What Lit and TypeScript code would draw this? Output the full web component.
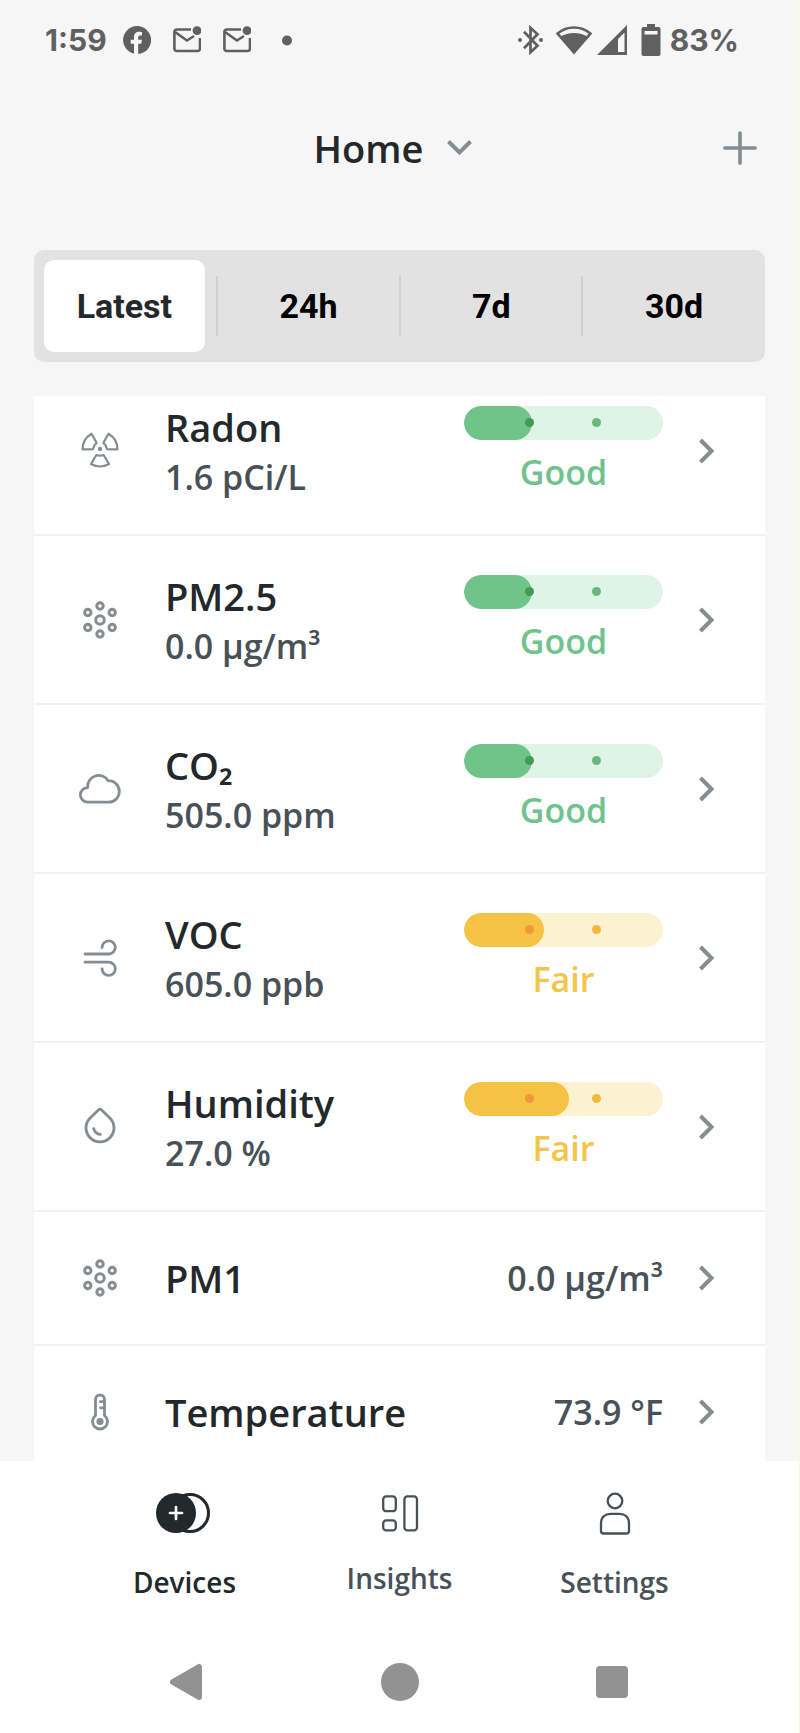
import { LitElement, html, css, svg, nothing, TemplateResult, SVGTemplateResult } from "lit";
import { customElement, property, state, query } from "lit/decorators.js";
import { classMap } from "lit/directives/class-map.js";
import { styleMap } from "lit/directives/style-map.js";

type Level = "good" | "fair";

interface Reading {
  name: string;
  value: string;
  icon: string;
  level?: Level;
  fill?: number;
}

const READINGS: Reading[] = [
  { name: "Radon", value: "1.6 pCi/L", icon: "radon", level: "good", fill: 34 },
  { name: "PM2.5", value: "0.0 µg/m³", icon: "particles", level: "good", fill: 34 },
  { name: "CO₂", value: "505.0 ppm", icon: "cloud", level: "good", fill: 34 },
  { name: "VOC", value: "605.0 ppb", icon: "wind", level: "fair", fill: 40 },
  { name: "Humidity", value: "27.0 %", icon: "drop", level: "fair", fill: 53 },
  { name: "PM1", value: "0.0 µg/m³", icon: "particles" },
  { name: "Temperature", value: "73.9 °F", icon: "thermometer" },
];

const LEVEL_LABEL: Record<Level, string> = { good: "Good", fair: "Fair" };
const RANGES = ["Latest", "24h", "7d", "30d"];

const blade = "M-9 15 L-3.6 6 Q0 7.4 3.6 6 L9 15 Q0 20 -9 15Z";

/* Sensor glyphs are drawn around the origin of a 44 unit box. */
const SENSOR_ICONS: Record<string, SVGTemplateResult> = {
  radon: svg`<g transform="translate(0 -2)" stroke-width="2.2">
    <path d=${blade}/><path d=${blade} transform="rotate(120)"/><path d=${blade} transform="rotate(240)"/>
    <circle r="2.2" fill="currentColor" stroke="none"/></g>`,
  particles: svg`<g stroke-width="3"><circle r="4.3"/><circle cy="-14" r="3.2"/><circle cy="14" r="3.2"/>
    <circle cx="-12.2" cy="-7.5" r="3.2"/><circle cx="12.2" cy="-7.5" r="3.2"/>
    <circle cx="-12.2" cy="7.5" r="3.2"/><circle cx="12.2" cy="7.5" r="3.2"/></g>`,
  cloud: svg`<path d="M-12.3 13.2 A7.3 7.3 0 0 1 -12.3 -1.5 A11 11 0 0 1 8 -8.4 A10.8 10.8 0 0 1 9 13.2 Z"/>`,
  wind: svg`<path d="M-15 -4 H8.7 A6.6 6.6 0 1 0 2.1 -10.4 M-15 4.2 H8.7 A6.6 6.6 0 1 1 2.1 10.8"/>`,
  drop: svg`<path d="M-1.6 -17 L-9.9 -9 A14 14 0 1 0 9.9 -9 L1.6 -17 Q0 -18.4 -1.6 -17Z"/>
    <path d="M-6.3 1.6 Q-4.6 7 .4 7.4"/>`,
  thermometer: svg`<path d="M-4.5 3.5 V-12.5 A4.5 4.5 0 0 1 4.5 -12.5 V3.5 A7.5 7.5 0 1 1 -4.5 3.5Z"/>
    <path d="M.5 -10.3 H4 M.5 -4.2 H4"/><circle cy="9.5" r="3.6" fill="currentColor" stroke="none"/>`,
};

const base = css`
  * {
    box-sizing: border-box;
  }
  svg {
    display: block;
    flex: none;
  }
  button {
    font: inherit;
    color: inherit;
    background: none;
    border: 0;
    margin: 0;
    padding: 0;
    cursor: pointer;
  }
`;

@customElement("status-bar")
class StatusBar extends LitElement {
  static styles = [
    base,
    css`
      :host {
        display: flex;
        justify-content: space-between;
        height: 80px;
        padding: 0 60px 0 45px;
        color: #606060;
        font: 700 30px/80px Inter, "Open Sans", sans-serif;
      }
      .side {
        display: flex;
        align-items: center;
      }
      .notices {
        gap: 22px;
        margin-left: 16px;
        display: flex;
        align-items: center;
      }
      .radios {
        display: flex;
        align-items: center;
        gap: 4px;
      }
      .battery {
        margin: 0 9px 0 14px;
      }
    `,
  ];

  private mail() {
    return html`<svg width="28" height="28" viewBox="0 0 28 28" fill="none">
      <path d="M18 3.5 H4 A2.6 2.6 0 0 0 1.4 6 V22.5 A2.6 2.6 0 0 0 4 25 H24.5 A2.6 2.6 0 0 0 27 22.5 V12" stroke="currentColor" stroke-width="2.6"/>
      <path d="M2 6 L14 14.5 L21 10" stroke="currentColor" stroke-width="2.6"/>
      <circle cx="24" cy="4.6" r="4.4" fill="currentColor"/>
    </svg>`;
  }

  render() {
    return html`
      <div class="side">
        <span>1:59</span>
        <div class="notices">
          <svg width="28" height="28" viewBox="0 0 28 28">
            <path fill="currentColor" d="M11 27.7 V17.8 H7.7 V13.8 H11 V11 C11 7.6 13 5.7 16.2 5.7 C17.6 5.7 19 6 19 6 V9.4 H17.3 C15.7 9.4 15.2 10.4 15.2 11.4 V13.8 H18.9 L18.3 17.8 H15.2 V28 A14 14 0 1 0 11 27.7Z"/>
          </svg>
          ${this.mail()} ${this.mail()}
          <svg width="28" height="28" viewBox="0 0 28 28"><circle cx="14" cy="14.5" r="5" fill="currentColor"/></svg>
        </div>
      </div>
      <div class="side">
        <div class="radios">
          <svg width="34" height="30" viewBox="0 0 34 30" fill="none">
            <path d="M7 6.5 L20.5 20.5 L13.5 27 V2.5 L20.5 9 L7 23" transform="translate(0 .3)" stroke="currentColor" stroke-width="2.7"/>
            <circle cx="3" cy="15" r="2" fill="currentColor"/><circle cx="24" cy="15" r="2" fill="currentColor"/>
          </svg>
          <svg width="38" height="30" viewBox="0 0 38 30" fill="none">
            <path d="M2.6 8.6 A25 25 0 0 1 35.4 8.6 L19 27.5Z" stroke="currentColor" stroke-width="2.6"/>
            <path d="M5.5 12 C12 6.7 26 6.7 32.5 12 L19 28Z" fill="currentColor"/>
          </svg>
          <svg width="30" height="30" viewBox="0 0 30 30">
            <path fill="currentColor" fill-rule="evenodd" d="M30 0 V30 H0Z M27.5 7.5 L21 14 V27 H27.5Z"/>
          </svg>
        </div>
        <svg class="battery" width="20" height="32" viewBox="0 0 20 32">
          <path fill="currentColor" fill-rule="evenodd" d="M6 0 H14 V3 H17.5 A2 2 0 0 1 19.5 5 V30 A2 2 0 0 1 17.5 32 H2.5 A2 2 0 0 1 .5 30 V5 A2 2 0 0 1 2.5 3 H6Z M3.5 7 V10.5 H16.5 V7Z"/>
        </svg>
        <span>83%</span>
      </div>
    `;
  }
}

@customElement("level-meter")
class LevelMeter extends LitElement {
  @property() level: Level = "good";
  @property({ type: Number }) fill = 0;

  static styles = [
    base,
    css`
      :host {
        display: block;
      }
      .meter {
        display: flex;
        flex-direction: column;
        align-items: center;
        gap: 8px;
      }
      .track {
        position: relative;
        width: 100%;
        height: 34px;
        border-radius: 17px;
        overflow: hidden;
      }
      .bar {
        height: 100%;
        border-radius: 17px;
      }
      .dot {
        position: absolute;
        top: 50%;
        width: 9px;
        height: 9px;
        margin: -5px 0 0 -5px;
        border-radius: 50%;
      }
      .first {
        left: 33.4%;
      }
      .second {
        left: 66.7%;
      }
      .label {
        line-height: 48px;
      }
      .good .track {
        background: #dff3e7;
      }
      .good .bar {
        background: #70c389;
      }
      .good .first {
        background: #439a54;
      }
      .good .second {
        background: #66b87b;
      }
      .good .label {
        color: #70c38c;
      }
      .fair .track {
        background: #fcf1d0;
      }
      .fair .bar {
        background: #f4c343;
      }
      .fair .first {
        background: #ee9838;
      }
      .fair .second {
        background: #f3b63e;
      }
      .fair .label {
        color: #f2c54b;
      }
    `,
  ];

  render() {
    return html`<div class="meter ${this.level}">
      <div class="track">
        <div class="bar" style=${styleMap({ width: `${this.fill}%` })}></div>
        <span class="dot first"></span><span class="dot second"></span>
      </div>
      <span class="label">${LEVEL_LABEL[this.level]}</span>
    </div>`;
  }
}

@customElement("app-root")
class AppRoot extends LitElement {
  @state() private range = "Latest";
  @query(".list") private list!: HTMLElement;

  static styles = [
    base,
    css`
      :host {
        display: flex;
        flex-direction: column;
        height: 100vh;
        background: #f6f6f6;
        border-right: 1px solid #f8f8ea;
        box-sizing: border-box;
        color: #23282b;
        font-family: "Open Sans", "Noto Sans", sans-serif;
        font-weight: 600;
      }
      .header {
        display: grid;
        grid-template-columns: 1fr auto 1fr;
        align-items: center;
        height: 136px;
        padding: 0 33px;
      }
      .place {
        grid-column: 2;
        display: flex;
        align-items: center;
        gap: 16px;
        font-size: 38px;
        line-height: 52px;
      }
      .add {
        justify-self: end;
        padding: 8px;
      }
      .muted {
        color: #858d91;
      }
      .ranges {
        display: grid;
        grid-template-columns: repeat(4, 1fr);
        margin: 34px;
        height: 112px;
        border-radius: 10px;
        background: #e2e2e2;
        font: 700 34px/40px Roboto, sans-serif;
        color: #000;
      }
      .cell {
        display: flex;
        align-items: center;
      }
      .cell + .cell::before {
        content: "";
        width: 2px;
        height: 60px;
        margin-left: -1px;
        background: #d0d0d0;
      }
      .range {
        flex: 1;
        align-self: stretch;
      }
      .range.active {
        margin: 10px 12px 10px 10px;
        border-radius: 10px;
        background: #fff;
        color: #23282b;
      }
      .list {
        flex: 1;
        min-height: 0;
        overflow-y: auto;
        scrollbar-width: none;
        margin: 0 34px;
        padding: 0;
        list-style: none;
        background: #fff;
      }
      .row {
        display: grid;
        grid-template-columns: 44px minmax(0, 1fr) auto 18px;
        align-items: center;
        height: 134px;
        padding: 0 49px 0 44px;
        border-bottom: 2px solid #f2f2f2;
        color: inherit;
        text-decoration: none;
        font-size: 34px;
        line-height: 48px;
      }
      .row.tall {
        height: 169px;
      }
      .texts {
        display: flex;
        flex-direction: column;
        padding-left: 43px;
      }
      .name {
        font-size: 38px;
        line-height: 52px;
      }
      .value {
        color: #475157;
      }
      .meter {
        width: 199px;
      }
      .aside {
        margin-right: 35px;
      }
      .tabs,
      .system {
        display: grid;
        grid-template-columns: repeat(3, 1fr);
        background: #fff;
        padding: 0 77px;
      }
      .tabs {
        height: 170px;
        padding-top: 28px;
        align-items: start;
      }
      .tab {
        display: flex;
        flex-direction: column;
        align-items: center;
        gap: 21px;
        font-size: 28px;
        line-height: 40px;
        color: #475157;
        text-decoration: none;
      }
      .tab.current {
        color: #23282b;
      }
      .system {
        height: 102px;
        align-items: center;
        justify-items: center;
        color: #929292;
      }
    `,
  ];

  /* The list opens with its first row partly scrolled under the range bar. */
  firstUpdated() {
    this.list.scrollTop = 29;
  }

  private row(r: Reading): TemplateResult {
    const value = html`<span class="value">${r.value}</span>`;
    return html`<li>
      <a class=${classMap({ row: true, tall: !!r.level })} href="#${r.name}">
        <svg class="muted" width="44" height="44" viewBox="-22 -22 44 44" fill="none" stroke="currentColor" stroke-width="2.8" stroke-linecap="round" stroke-linejoin="round">
          ${SENSOR_ICONS[r.icon]}
        </svg>
        <span class="texts"><span class="name">${r.name}</span>${r.level ? value : nothing}</span>
        <span class="aside">
          ${r.level
            ? html`<level-meter class="meter" .level=${r.level} .fill=${r.fill ?? 0}></level-meter>`
            : value}
        </span>
        <svg class="muted" width="18" height="26" viewBox="0 0 18 26" fill="none" stroke="currentColor" stroke-width="4">
          <path d="M2.5 2 L13.5 13 L2.5 24"/>
        </svg>
      </a>
    </li>`;
  }

  render() {
    return html`
      <status-bar></status-bar>
      <header class="header">
        <button class="place">
          Home
          <svg class="muted" width="46" height="26" viewBox="0 0 46 26" fill="none" stroke="currentColor" stroke-width="4">
            <path d="M9.5 6.5 L20.5 17.5 L31.5 6.5"/>
          </svg>
        </button>
        <button class="add muted" aria-label="Add device">
          <svg width="36" height="36" viewBox="0 0 36 36" fill="none" stroke="currentColor" stroke-width="3.7" stroke-linecap="round">
            <path d="M18 3 V33 M3 18 H33"/>
          </svg>
        </button>
      </header>
      <div class="ranges">
        ${RANGES.map(
          (r) => html`<div class="cell">
            <button class=${classMap({ range: true, active: r === this.range })} @click=${() => (this.range = r)}>${r}</button>
          </div>`
        )}
      </div>
      <ul class="list">
        ${READINGS.map((r) => this.row(r))}
      </ul>
      <nav class="tabs">
        <a class="tab current" href="#devices">
          <svg width="60" height="52" viewBox="-28 -24 60 52" fill="none">
            <circle cx="7" r="18.5" stroke="currentColor" stroke-width="3"/>
            <circle cx="-7" r="20" fill="currentColor"/>
            <path d="M-13 0 H-1 M-7 -6 V6" stroke="#fff" stroke-width="2.7" stroke-linecap="round"/>
          </svg>
          Devices
        </a>
        <a class="tab" href="#insights">
          <svg width="48" height="48" viewBox="-24 -24 48 48" fill="none" stroke="currentColor" stroke-width="2.3">
            <rect x="-16.8" y="-16.6" width="12.6" height="14.8" rx="3"/>
            <rect x="-16.8" y="7.4" width="12.6" height="10" rx="3"/>
            <rect x="4.4" y="-16.6" width="12.6" height="34" rx="3"/>
          </svg>
          Insights
        </a>
        <a class="tab" href="#settings">
          <svg width="52" height="52" viewBox="-26 -24 52 52" fill="none" stroke="currentColor" stroke-width="2.3">
            <circle cy="-12" r="7.3"/>
            <path d="M-14 10.5 C-14 4 -10 .8 -4.5 .8 H4.5 C10 .8 14 4 14 10.5 V18 A2.5 2.5 0 0 1 11.5 20.5 H-11.5 A2.5 2.5 0 0 1 -14 18Z"/>
          </svg>
          Settings
        </a>
      </nav>
      <div class="system">
        <button aria-label="Back">
          <svg width="38" height="38" viewBox="-1 0 38 38" fill="currentColor" stroke="currentColor" stroke-width="6" stroke-linejoin="round">
            <path d="M32 4 V34 L6 19Z"/>
          </svg>
        </button>
        <button aria-label="Home">
          <svg width="38" height="38" viewBox="0 0 38 38" fill="currentColor"><circle cx="19" cy="19" r="19"/></svg>
        </button>
        <button aria-label="Recents">
          <svg width="38" height="38" viewBox="0 0 38 38" fill="currentColor"><rect y="3" width="32" height="32" rx="4"/></svg>
        </button>
      </div>
    `;
  }
}
